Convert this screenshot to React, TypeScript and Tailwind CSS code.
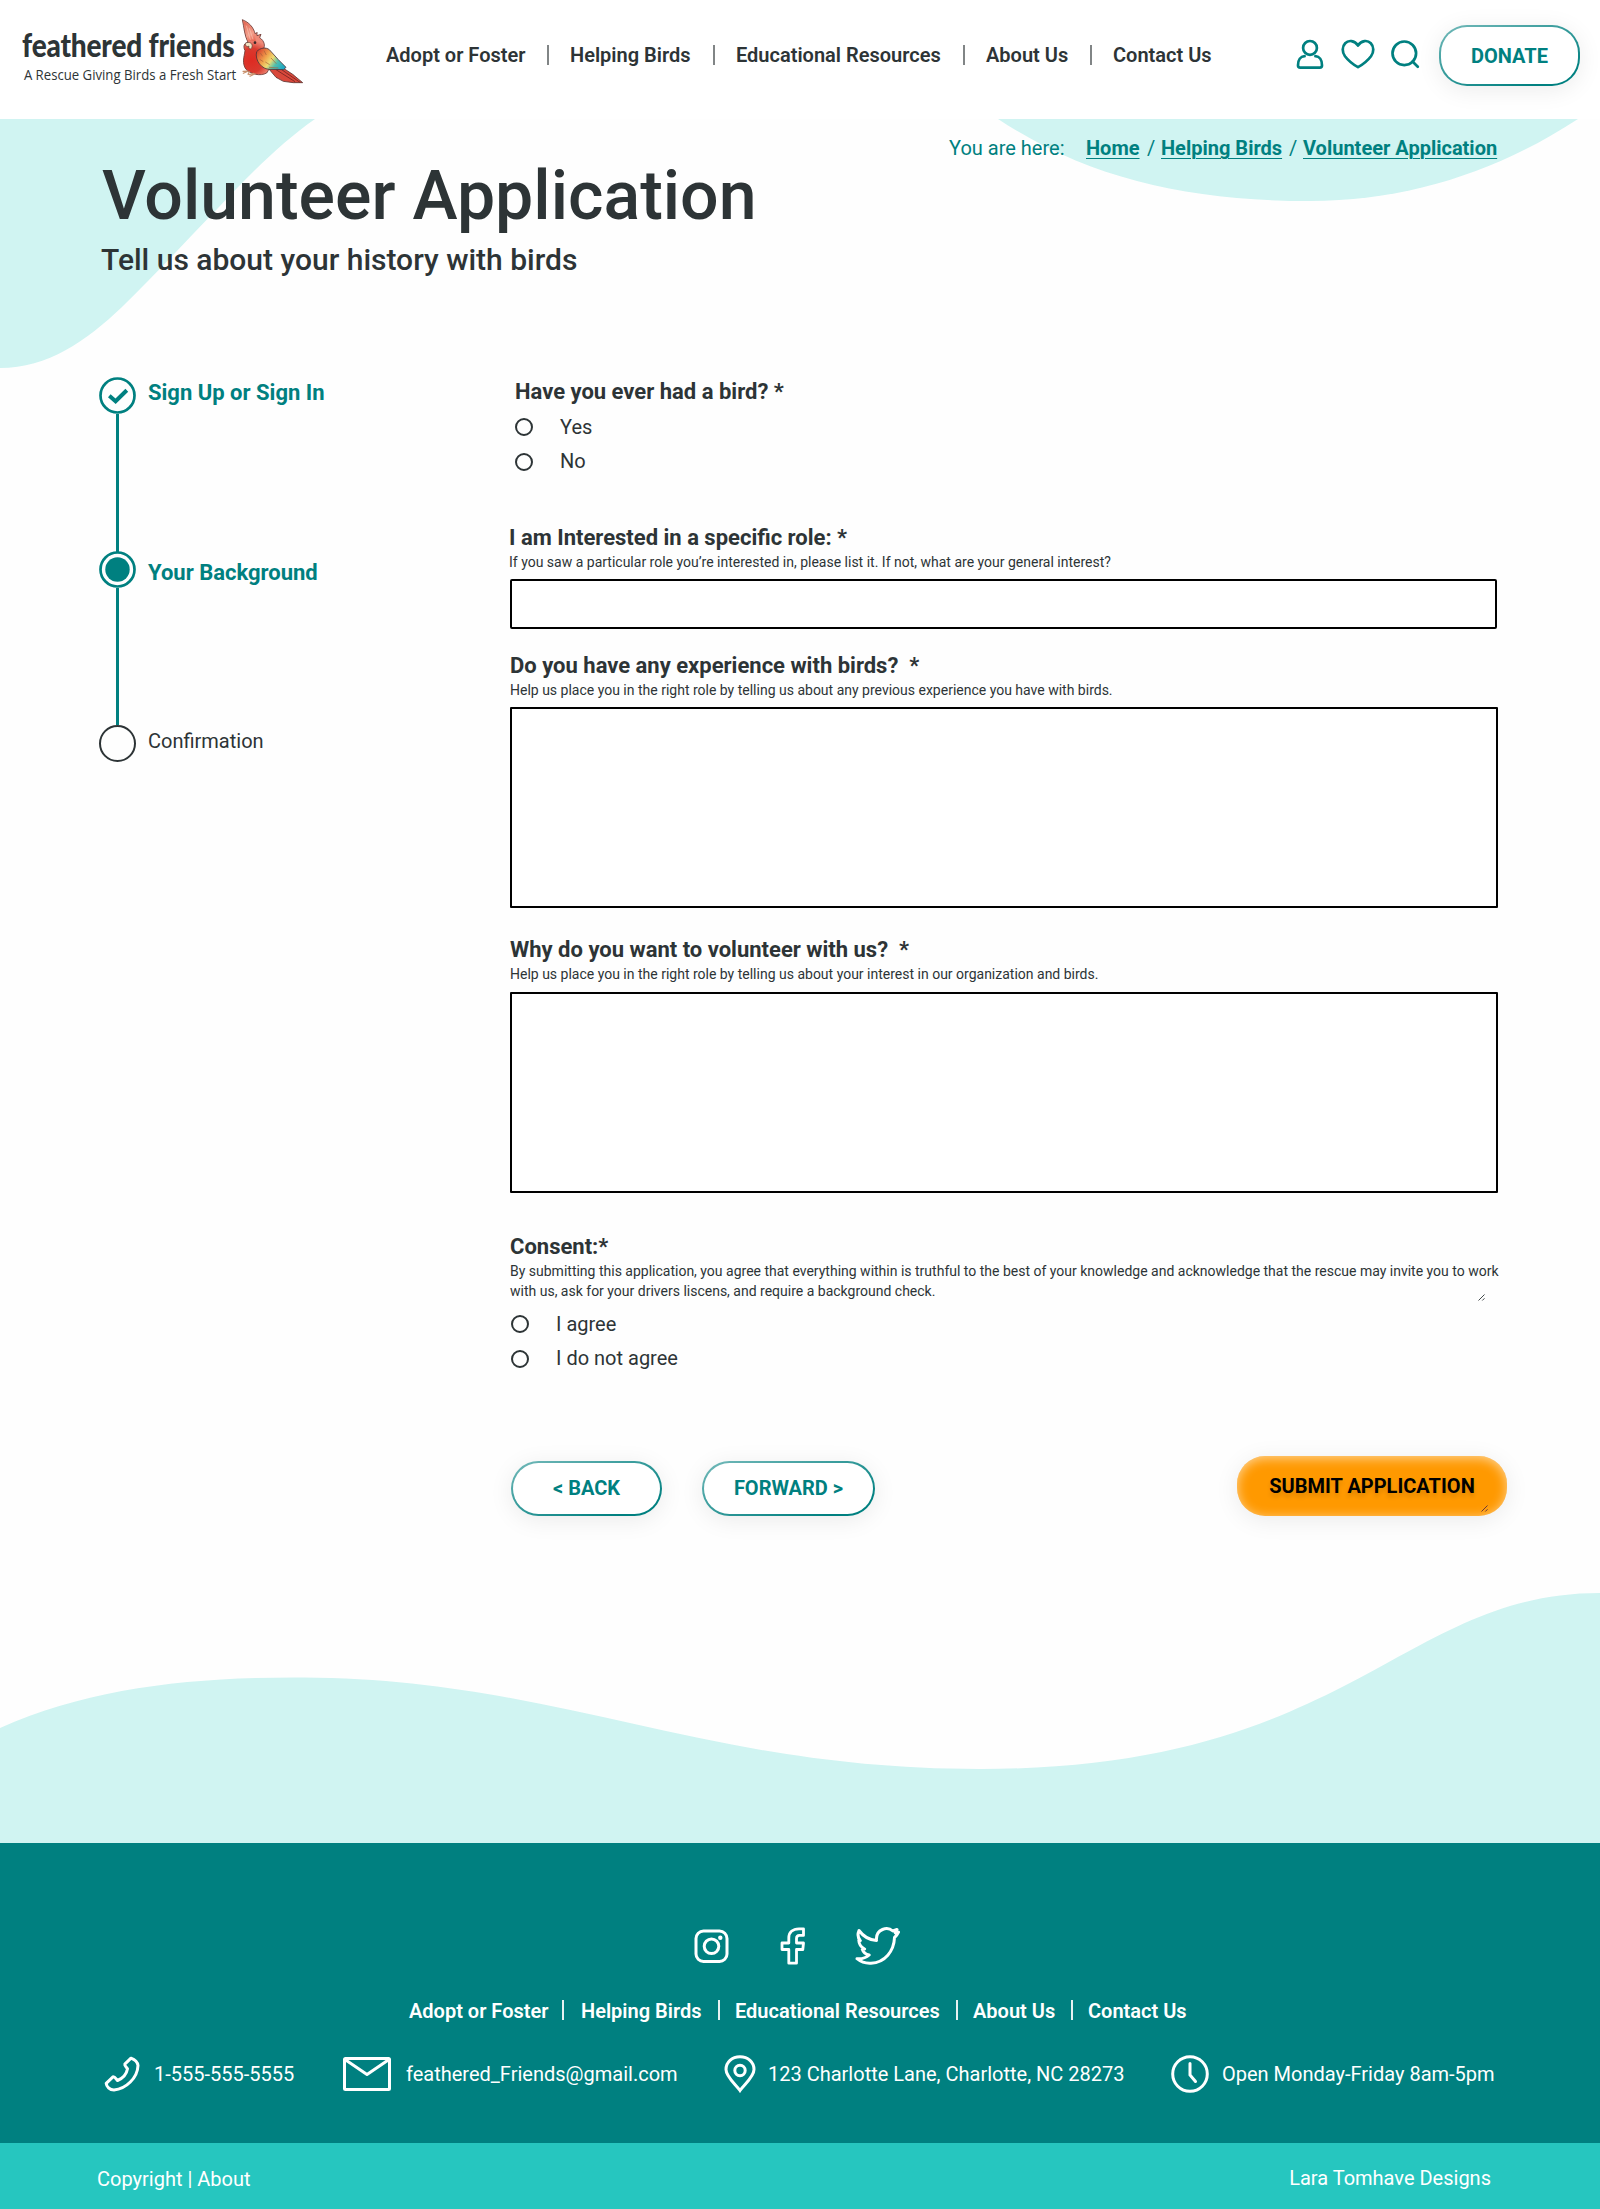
import React from "react";

const navLinks = [
  { label: "Adopt or Foster", width: "w-[140px]", divider: "" },
  { label: "Helping Birds", width: "w-[122px]", divider: "ml-[13px] mr-[17px]" },
  { label: "Educational Resources", width: "w-[206px]", divider: "mx-[15px]" },
  { label: "About Us", width: "w-[83px]", divider: "mx-[15px]" },
  { label: "Contact Us", width: "w-[99px]", divider: "mx-[15px]" },
];

function Bird() {
  return (
    <svg className="ml-[5px] mt-[17px] h-[68px] w-[67px] shrink-0" viewBox="720 50 201 204" fill="none">
      <defs>
        <linearGradient id="wing" x1="775" y1="150" x2="850" y2="205" gradientUnits="userSpaceOnUse">
          <stop offset="0" stopColor="#d8442f" />
          <stop offset=".32" stopColor="#f0a24c" />
          <stop offset=".52" stopColor="#eedb72" />
          <stop offset=".72" stopColor="#4fbfae" />
          <stop offset="1" stopColor="#1ba6c4" />
        </linearGradient>
        <linearGradient id="crest" x1="730" y1="60" x2="765" y2="130" gradientUnits="userSpaceOnUse">
          <stop offset="0" stopColor="#e0604c" />
          <stop offset=".6" stopColor="#f3a08c" />
          <stop offset="1" stopColor="#e4523f" />
        </linearGradient>
        <radialGradient id="body" cx="755" cy="180" r="60" gradientUnits="userSpaceOnUse">
          <stop offset="0" stopColor="#df2a22" />
          <stop offset=".6" stopColor="#d93a2e" />
          <stop offset="1" stopColor="#ee8a78" />
        </radialGradient>
      </defs>
      <path d="M806 205 L852 205 L878 222 L908 247 L880 247 L850 243 L828 231 Z" fill="#d9483b" stroke="#5b3531" strokeWidth="2.5" />
      <path d="M828 208 L885 244 M845 208 L900 246" stroke="#742420" strokeWidth="2.5" />
      <path d="M744 126 C733 105 732 80 727 58 C748 67 759 79 766 101 L771 96 L771 106 L783 102 L779 112 C794 122 796 137 790 147 C810 170 815 200 800 218 C780 229 752 221 738 207 C725 188 732 171 735 151 C728 137 733 128 744 126 Z" fill="url(#body)" stroke="#6b3733" strokeWidth="2.5" strokeLinejoin="round" />
      <path d="M729 61 C747 70 757 81 763 101 L768 124 C758 121 749 121 745 124 C735 104 736 80 729 61 Z" fill="url(#crest)" />
      <path d="M739 76 L751 118 M748 84 L759 117" stroke="#f9c4b4" strokeWidth="2" />
      <path d="M736 129 C747 122 759 129 756 140 C753 151 744 144 747 137 C741 141 736 137 736 129 Z" fill="#f3e3c4" stroke="#5b4038" strokeWidth="2" />
      <circle cx="765" cy="127" r="4" fill="#3b2828" />
      <path d="M770 154 C780 142 798 140 808 148 L835 178 L858 201 L851 208 L810 207 C786 208 763 180 770 154 Z" fill="url(#wing)" stroke="#49343a" strokeWidth="2.5" strokeLinejoin="round" />
      <path d="M781 158 L788 168 M792 151 L799 164 M779 177 L790 184 M796 185 L809 193 M813 173 L829 190 M807 201 L835 203" stroke="#a7603a" strokeWidth="2" />
      <path d="M744 212 L729 213 M744 213 L730 219 M748 214 L744 222 M761 219 L747 223 M765 220 L750 228" stroke="#c9926e" strokeWidth="3.5" strokeLinecap="round" />
    </svg>
  );
}

function Logo() {
  return (
    <div className="flex w-[310px]">
      <div className="w-[235px] shrink-0 pl-[22px] pt-[24px] text-[#2d3436]">
        <div className="h-[42px] origin-left scale-x-[.875] whitespace-nowrap font-['Lato'] text-[32px] font-black leading-[42px] tracking-[-0.2px]">
          feathered friends
        </div>
        <div className="-mt-[2px] origin-left scale-x-[.94] whitespace-nowrap pl-[2px] font-['Open_Sans'] text-[14px] leading-[22px]">
          A Rescue Giving Birds a Fresh Start
        </div>
      </div>
      <Bird />
    </div>
  );
}

function PillButton({ className, children }: { className: string; children: React.ReactNode }) {
  return (
    <button
      className={
        "flex shrink-0 items-center justify-center whitespace-nowrap rounded-[28px] border-2 border-transparent text-[20px] font-bold leading-[24px] text-[#008080] shadow-[0_4px_24px_rgba(0,0,0,0.08)] [background:linear-gradient(#fff,#fff)_padding-box,linear-gradient(160deg,#73b9b9,#008080_85%)_border-box] " +
        className
      }
    >
      {children}
    </button>
  );
}

function Header() {
  return (
    <header className="flex h-[119px] items-start bg-white">
      <Logo />
      <nav className="ml-[76px] mt-[43px] flex h-6 items-center text-[20px] font-semibold leading-6 text-[#2d3436]">
        {navLinks.map((l, i) => (
          <React.Fragment key={l.label}>
            {i > 0 && <span className="mx-[21px] h-5 w-[2px] bg-[#2d3436]/60" />}
            <a className={"whitespace-nowrap " + l.width}>{l.label}</a>
          </React.Fragment>
        ))}
      </nav>
      <div className="ml-auto mr-[20px] flex items-start text-[#008080]">
        <svg className="mt-[39px] h-[31px] w-[28px]" viewBox="0 0 28 31" fill="none" stroke="currentColor" strokeWidth="2.7" strokeLinejoin="round">
          <circle cx="14" cy="8.9" r="6.9" />
          <path d="M8.6 17.2C4.5 17.4 2 21 2 26.2C2 28 2.6 28.6 4.2 28.6H23.8C25.4 28.6 26 28 26 26.2C26 21 23.5 17.4 19.4 17.2" strokeLinecap="round" />
        </svg>
        <svg className="ml-[17px] mt-[39px] h-[31px] w-[34px]" viewBox="0 0 34 31" fill="none" stroke="currentColor" strokeWidth="2.7" strokeLinejoin="round">
          <path d="M17 6.5C13.5 1.2 7.5 .8 4.2 4.2C.9 7.6 1 13 4 17.2C7 21.2 12.5 25.6 17 28.2C21.5 25.6 27 21.2 30 17.2C33 13 33.1 7.6 29.8 4.2C26.5 .8 20.5 1.2 17 6.5Z" />
        </svg>
        <svg className="ml-[15px] mt-[39px] h-[31px] w-[30px]" viewBox="0 0 30 31" fill="none" stroke="currentColor" strokeWidth="2.7" strokeLinecap="round">
          <circle cx="14.3" cy="14.3" r="11.8" />
          <path d="M22.5 22.5L27.8 27.8" />
        </svg>
        <PillButton className="ml-[19px] mt-[25px] h-[61px] w-[141px]">DONATE</PillButton>
      </div>
    </header>
  );
}

function Radio({ label, className }: { label: string; className: string }) {
  return (
    <label className="flex h-[35px] items-center text-[20px] leading-6 text-[#2d3436]">
      <span className="h-[18px] w-[18px] shrink-0 rounded-full border-2 border-[#2d3436]" />
      <span className={"whitespace-nowrap " + className}>{label}</span>
    </label>
  );
}

function Question({ title, hint }: { title: string; hint: string }) {
  return (
    <>
      <h3 className="whitespace-pre text-[22px] font-bold leading-[26px]">{title}</h3>
      <p className="mt-[1px] whitespace-pre text-[14px] leading-5">{hint}</p>
    </>
  );
}

function Stepper() {
  return (
    <aside className="ml-[99px] mt-[100px] w-[411px] shrink-0">
      <div className="flex">
        <svg className="h-[37px] w-[37px]" viewBox="0 0 37 37" fill="none" stroke="#008080">
          <circle cx="18.5" cy="18.5" r="17" strokeWidth="2.7" />
          <path d="M10.3 18.7L16.6 24.3L27.8 13.3" strokeWidth="4" />
        </svg>
        <span className="ml-[12px] mt-[3px] text-[22px] font-bold leading-[26px] text-[#008080]">Sign Up or Sign In</span>
      </div>
      <div className="ml-[17px] h-[138px] w-[3px] bg-[#008080]" />
      <div className="flex">
        <svg className="-mt-[1px] mb-[1px] h-[37px] w-[37px]" viewBox="0 0 37 37" fill="none" stroke="#008080">
          <circle cx="18.5" cy="18.5" r="17" strokeWidth="2.7" />
          <circle cx="18.5" cy="18.5" r="12.2" fill="#008080" stroke="none" />
        </svg>
        <span className="ml-[12px] mt-[8px] text-[22px] font-bold leading-[26px] text-[#008080]">Your Background</span>
      </div>
      <div className="-mt-[1px] ml-[17px] h-[137px] w-[3px] bg-[#008080]" />
      <div className="flex">
        <span className="h-[37px] w-[37px] rounded-full border-2 border-[#2d3436]" />
        <span className="ml-[12px] mt-[4px] text-[20px] leading-6 text-[#2d3436]">Confirmation</span>
      </div>
    </aside>
  );
}

function Grip({ className }: { className: string }) {
  return (
    <svg className={"absolute h-[7px] w-[7px] " + className} viewBox="0 0 7 7" stroke="currentColor" strokeWidth="0.9">
      <path d="M.5 6.5L6.5 .5M4.3 6.5L6.5 4.3" />
    </svg>
  );
}

function Form() {
  return (
    <form className="mt-[102px] w-[998px] text-[#2d3436]">
      <div className="pl-[5px]">
        <h3 className="text-[22px] font-bold leading-[26px]">Have you ever had a bird? *</h3>
        <div className="mt-[4px]">
          <Radio label="Yes" className="ml-[27px]" />
          <Radio label="No" className="-mt-[2px] ml-[27px]" />
        </div>
      </div>
      <div className="mt-[46px]">
        <div className="-ml-[1px]">
          <Question title="I am Interested in a specific role: *" hint="If you saw a particular role you’re interested in, please list it. If not, what are your general interest?" />
        </div>
        <div className="mt-[7px] h-[50px] w-[987px] rounded-[2px] border-2 border-black bg-white" />
      </div>
      <div className="mt-[24px]">
        <Question title="Do you have any experience with birds?  *" hint="Help us place you in the right role by telling us about any previous experience you have with birds." />
        <div className="mt-[7px] h-[201px] w-[988px] rounded-[1px] border-2 border-black bg-white" />
      </div>
      <div className="mt-[29px]">
        <Question title="Why do you want to volunteer with us?  *" hint="Help us place you in the right role by telling us about your interest in our organization and birds." />
        <div className="mt-[8px] h-[201px] w-[988px] rounded-[1px] border-2 border-black bg-white" />
      </div>
      <div className="relative mt-[41px]">
        <Question
          title="Consent:*"
          hint={"By submitting this application, you agree that everything within is truthful to the best of your knowledge and acknowledge that the rescue may invite you to work\nwith us, ask for your drivers liscens, and require a background check."}
        />
        <Grip className="left-[968px] top-[60px]" />
        <div className="mt-[5px] pl-[1px]">
          <Radio label="I agree" className="ml-[27px]" />
          <Radio label="I do not agree" className="-mt-[2px] ml-[27px]" />
        </div>
      </div>
      <div className="mt-[80px] flex items-start">
        <PillButton className="ml-[1px] mt-[5px] h-[55px] w-[151px] pb-[2px]">&lt; BACK</PillButton>
        <PillButton className="ml-[40px] mt-[5px] h-[55px] w-[173px] pb-[2px]">FORWARD &gt;</PillButton>
        <button className="relative ml-[362px] flex h-[60px] w-[270px] shrink-0 items-center justify-center whitespace-nowrap rounded-[28px] bg-[#ff9900] text-[20px] font-bold leading-6 text-black shadow-[inset_0_2px_12px_rgba(255,255,255,0.6),0_4px_24px_rgba(0,0,0,0.08)] [text-shadow:0_4px_4px_rgba(0,0,0,0.12)]">
          SUBMIT APPLICATION
          <Grip className="left-[244px] top-[49px] text-[#5b2b3b]" />
        </button>
      </div>
    </form>
  );
}

function Main() {
  return (
    <main className="relative h-[1724px] overflow-hidden bg-[#fefefe]">
      <svg className="absolute left-0 top-0" width="1600" height="1724" viewBox="0 119 1600 1724" fill="#d0f4f2">
        <path d="M0 119H315C282 142 250 174 219 207C187 240 155 275 122 307C86 341 48 368 0 368Z" />
        <path d="M998 119C1090 180 1190 201 1310 201C1410 201 1500 170 1578 119Z" />
        <path d="M0 1728C90 1688 190 1677 303 1677.5C560 1679 700 1769 980 1769C1350 1769 1400 1593 1600 1593V1843H0Z" />
      </svg>
      <div className="relative">
        <div className="ml-[949px] flex h-[41px] whitespace-pre pt-[17px] text-[20px] leading-6 text-[#008080]">
          <span className="w-[137px]">You are here:</span>
          <a className="w-[61px] font-bold"><span className="underline decoration-1 underline-offset-[3px]">Home</span></a>
          <span className="w-[14px]">/</span>
          <a className="w-[128px] font-bold"><span className="underline decoration-1 underline-offset-[3px]">Helping Birds</span></a>
          <span className="w-[14px]">/</span>
          <a className="font-bold"><span className="underline decoration-1 underline-offset-[3px]">Volunteer Application</span></a>
        </div>
        <h1 className="ml-[102px] whitespace-nowrap text-[68px] font-medium leading-[72px] text-[#2d3436]">Volunteer Application</h1>
        <h2 className="ml-[101px] mt-[10px] whitespace-nowrap text-[30px] font-medium leading-[35px] text-[#2d3436]">Tell us about your history with birds</h2>
        <div className="flex items-start">
          <Stepper />
          <Form />
        </div>
      </div>
    </main>
  );
}

function Footer() {
  return (
    <footer className="text-white">
      <div className="h-[300px] bg-[#008080]">
        <div className="flex items-center pt-[84px]">
          <svg className="ml-[694px] h-[38px] w-[35px]" viewBox="0 0 35 38" fill="none" stroke="white" strokeWidth="3">
            <rect x="2" y="4" width="31" height="30.5" rx="7.5" />
            <circle cx="17.5" cy="19.3" r="7.3" />
            <circle cx="26.3" cy="10.7" r="2.2" fill="white" stroke="none" />
          </svg>
          <svg className="ml-[51px] h-[38px] w-[26px]" viewBox="0 0 26 38" fill="none" stroke="white" strokeWidth="2.8" strokeLinejoin="round">
            <path d="M23.5 1.8H19C12.5 1.8 8.8 5.5 8.8 11V16H2V22.5H8.8V36.2H16.5V22.5H22.8L23.5 16H16.5V11.5C16.5 9.5 17.5 8.4 19.5 8.4H23.5Z" />
          </svg>
          <svg className="ml-[49px] h-[38px] w-[45px]" viewBox="0 0 45 38" fill="none" stroke="white" strokeWidth="3" strokeLinejoin="round">
            <path d="M21.5 13.5C14 13 8 9 4 3.5C2.3 7.5 3 11 5.3 13.7L3.8 13.3C4 17.5 6 20.3 9.6 22L7.3 22.2C8.4 25.5 10.7 27.5 14.2 28C11 31 7 32 2 31.7C6 35 11 36.5 16 36.2C30 35.5 39 24 39.5 10.5C41 9.2 42.5 7.5 43.5 5.2L40.3 6L42 2.5L37.8 4C35 1.5 31 1 27.5 2.5C22.8 4.5 21 8.5 21.5 13.5Z" />
          </svg>
        </div>
        <nav className="ml-[409px] mt-[34px] flex h-6 items-center text-[20px] font-semibold leading-6">
          {navLinks.map((l, i) => (
            <React.Fragment key={l.label}>
              {i > 0 && <span className={"-mt-[2px] h-5 w-[2px] bg-white/90 " + l.divider} />}
              <a className={"whitespace-nowrap " + l.width}>{l.label}</a>
            </React.Fragment>
          ))}
        </nav>
        <div className="mt-[31px] flex h-[40px] items-center whitespace-nowrap text-[20px] leading-6">
          <svg className="ml-[104px] h-[36px] w-[36px] shrink-0" viewBox="0 0 36 36" fill="none" stroke="white" strokeWidth="3" strokeLinejoin="round">
            <path d="M27 2.2L20.8 8.2C20.2 9.5 22.5 11 23.5 12.8C22.5 18.5 18.5 22.5 13.5 24.5C11.8 22.5 10.3 20.2 9 20.8L2.2 27.3C2.5 30.5 5.5 34 10 34C22 33 33.5 22 34 9.5C33.5 6 30.5 3.5 27 2.2Z" />
          </svg>
          <span className="ml-[14px] w-[189px]">1-555-555-5555</span>
          <svg className="h-[34px] w-[48px] shrink-0" viewBox="0 0 48 34" fill="none" stroke="white" strokeWidth="3" strokeLinejoin="round">
            <rect x="1.5" y="1.5" width="45" height="31" rx="1" />
            <path d="M2 2.5L24 17.5L46 2.5" />
          </svg>
          <span className="ml-[15px] w-[318px]">feathered_Friends@gmail.com</span>
          <svg className="h-[38px] w-[32px] shrink-0" viewBox="0 0 32 38" fill="none" stroke="white" strokeWidth="3">
            <path d="M16 35.5C12 29.5 2 22 2 14.5C2 7 8 1.8 16 1.8C24 1.8 30 7 30 14.5C30 22 20 29.5 16 35.5Z" />
            <circle cx="16" cy="15.5" r="5.2" />
          </svg>
          <span className="ml-[12px] w-[403px]">123 Charlotte Lane, Charlotte, NC 28273</span>
          <svg className="h-[38px] w-[38px] shrink-0" viewBox="0 0 38 38" fill="none" stroke="white" strokeWidth="3" strokeLinecap="round">
            <circle cx="19" cy="19" r="17.3" />
            <path d="M19 8.5V20L24.5 26.5" />
          </svg>
          <span className="ml-[13px]">Open Monday-Friday 8am-5pm</span>
        </div>
      </div>
      <div className="flex h-[66px] items-start justify-between bg-[#26c6bf] pl-[97px] pr-[109px] pt-[24px] text-[20px] leading-6">
        <span>Copyright | About</span>
        <span className="-mt-[1px]">Lara Tomhave Designs</span>
      </div>
    </footer>
  );
}

export default function App() {
  return (
    <div className="w-[1600px] bg-white font-['Roboto',sans-serif]">
      <Header />
      <Main />
      <Footer />
    </div>
  );
}
